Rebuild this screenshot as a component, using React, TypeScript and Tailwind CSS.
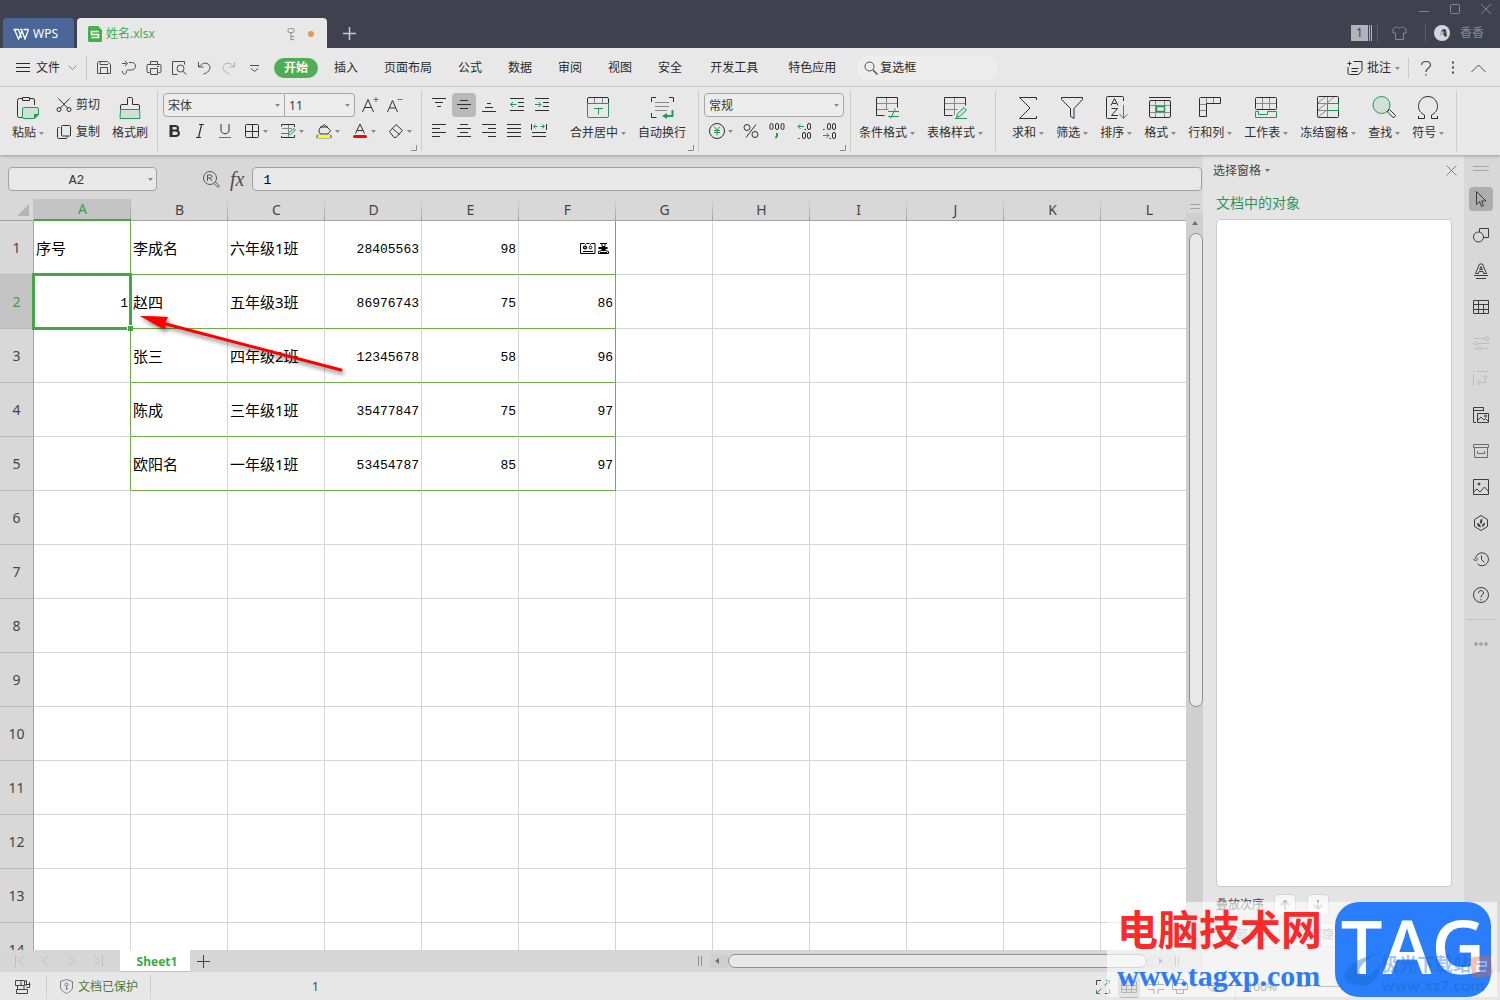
import React from 'react';

const GREEN = '#219a56';

type IcoProps = { w?: number; h?: number; className?: string; children: React.ReactNode };

const Ico: React.FC<IcoProps> = ({ w = 16, h = w, className = '', children }) => (
  <svg width={w} height={h} viewBox={`0 0 ${w} ${h}`} fill="none" stroke="currentColor" className={`shrink-0 ${className}`} aria-hidden="true">
    {children}
  </svg>
);

const Caret = ({ className = 'text-[#8a8a8a]' }: { className?: string }) => (
  <svg width="5" height="3" viewBox="0 0 5 3" fill="currentColor" className={`shrink-0 ${className}`} aria-hidden="true">
    <path d="M0 0h5L2.500 3z" />
  </svg>
);

const Divider = () => <div className="my-1 w-px self-stretch bg-[#cbcbcb]" />;

const Corner = () => (
  <Ico w={6} className="absolute right-1 bottom-1 text-[#8a8a8a]">
    <path d="M5.500 0v5.500H0" />
  </Ico>
);

/* ---------- Ribbon icons, 24px ---------- */

const PasteIcon = () => (
  <Ico w={24}>
    <path d="M6.500 21.500h-3a2 2 0 0 1-2-2v-15a2 2 0 0 1 2-2H6M14 2.500h3a1.500 1.500 0 0 1 1.500 1.500v5" />
    <path d="M6.500 1.500h7v3h-7z" />
    <path d="M8 11.500h13a1.500 1.500 0 0 1 1.500 1.500v6l-4 3.500H8A1.500 1.500 0 0 1 6.500 21v-8A1.500 1.500 0 0 1 8 11.500z" fill="#cfe0d6" stroke={GREEN} />
    <path d="M18.500 22v-3.500h4" fill={GREEN} stroke={GREEN} />
  </Ico>
);

const BrushIcon = () => (
  <Ico w={24}>
    <path d="M9.500 8.500v-6a1 1 0 0 1 1-1h3a1 1 0 0 1 1 1v6h5.500a1.500 1.500 0 0 1 1.500 1.500v3.500h-19V10A1.500 1.500 0 0 1 4 8.500z" />
    <path d="M2.500 13.500h19l.5 9h-20z" fill="#cfe0d6" stroke={GREEN} />
  </Ico>
);

const MergeIcon = () => (
  <Ico w={24}>
    <path d="M8.500 2v5M16.500 2v5" stroke="#8a8a8a" />
    <path d="M1.500 7.500V3A1.500 1.500 0 0 1 3 1.500h18A1.500 1.500 0 0 1 22.500 3v4.500" />
    <path d="M1.500 7.500h21V20a1.500 1.500 0 0 1-1.500 1.500H3A1.500 1.500 0 0 1 1.500 20zM8 12.500h9M12.500 12.500v6" stroke={GREEN} />
  </Ico>
);

const WrapIcon = () => (
  <Ico w={24}>
    <path d="M6 1.500H1.500V6M19 1.500h4.500V6M1.500 17v4.500h5" />
    <path d="M5 6.500h14M5 10.500h14M5 14.500h12" stroke="#8a8a8a" />
    <path d="M22.500 14v6h-6" stroke={GREEN} strokeWidth="2" />
    <path d="M17 17v6l-5-3z" fill={GREEN} stroke="none" />
  </Ico>
);

const CondIcon = () => (
  <Ico w={24}>
    <path d="M11.500 2v6M11.500 8v6M1.500 7.500h21M1.500 13.500h12" stroke="#8a8a8a" />
    <path d="M9.500 19.500h-8v-18h21v10" />
    <path d="M13 15.500h11M13 20.500h11M20.500 12.500l-5 10" stroke={GREEN} />
  </Ico>
);

const StyleIcon = () => (
  <Ico w={24}>
    <path d="M11.500 2v17M1.500 7.500h21M1.500 13.500h13" stroke="#8a8a8a" />
    <path d="M9.500 19.500h-8v-18h21v8" />
    <path d="M13.500 21.500l1-4 6.500-6 2.500 2.500-6 6-4 1.500zM12 22.500h12" fill="#cfe0d6" stroke={GREEN} />
  </Ico>
);

const SumIcon = () => (
  <Ico w={24}>
    <path d="M20.500 4V1.500h-17L14 12 3.500 22.500h17V20" />
  </Ico>
);

const FilterIcon = () => (
  <Ico w={24}>
    <path d="M1.500 1.500h21v2l-8.500 9v10l-3.500-2v-8l-9-9z" />
  </Ico>
);

const SortIcon = () => (
  <Ico w={24}>
    <path d="M19.500 5V1.500A1 1 0 0 0 18.500.5h-15a1 1 0 0 0-1 1v20a1 1 0 0 0 1 1H13" />
    <path d="M7 9.500l3.500-7 3.500 7M8.500 7.500h4M7.500 12.500h6l-6 7h6.500" />
    <path d="M19.500 9v13M15.500 18l4 4.500 4-4.500" stroke={GREEN} />
  </Ico>
);

const FormatIcon = () => (
  <Ico w={24}>
    <path d="M1 1.500h22" />
    <path d="M7.500 5v16M16.500 5v16M1 9.500h22M1 16.500h22" stroke="#8a8a8a" />
    <rect x="1.500" y="4.500" width="21" height="17" rx="1.500" />
    <path d="M8.500 10.500h8v5h-8z" fill="#e8e8e8" stroke={GREEN} strokeWidth="1.500" />
  </Ico>
);

const RowColIcon = () => (
  <Ico w={24}>
    <path d="M8.500 2v6M15.500 2v6M2 8.500h6M2 14.500h6" stroke="#8a8a8a" />
    <path d="M2.500 1.500h20v6h-14v13h-7v-18a1 1 0 0 1 1-1z" />
  </Ico>
);

const SheetIcon = () => (
  <Ico w={24}>
    <path d="M8.500 2v12M15.500 2v12M2 7.500h20" stroke="#8a8a8a" />
    <rect x="1.500" y="1.500" width="21" height="12" rx="1" />
    <path d="M1.500 15.500v6h21v-6h-9v3h-9v-3z" stroke={GREEN} />
  </Ico>
);

const FreezeIcon = () => (
  <Ico w={24}>
    <path d="M11.500 1v21M2 7.500h20M2 14.500h20M2 7l7-6M11 7l7-6M2 14l9-7M2 21l9-7" stroke="#8a8a8a" />
    <rect x="1.500" y=".5" width="21" height="21" rx="1" />
    <path d="M11.500 7.500h11v7h-11z" fill="#e8e8e8" stroke={GREEN} />
  </Ico>
);

const FindIcon = () => (
  <Ico w={24}>
    <circle cx="9.500" cy="9" r="8.500" fill="#cfe0d6" stroke={GREEN} />
    <path d="M16 15l1.500-1.500 6 6-2 2.500-6-6z" />
  </Ico>
);

const OmegaIcon = () => (
  <Ico w={24}>
    <path d="M2 22.500h6.500v-3.500C4.500 17 2.500 14 2.500 10.500c0-5.500 4-10 9.500-10s9.500 4.500 9.500 10c0 3.500-2 6.500-6 8.500v3.500H22M2.500 22.500V20M21.500 22.500V20" />
  </Ico>
);

type BigProps = { label: string; icon: React.ReactNode; caret?: boolean };

const BigButton = ({ label, icon, caret = true }: BigProps) => (
  <button type="button" className="flex flex-col items-center gap-[5px] pt-[9px] text-[#2f2f2f]">
    {icon}
    <span className="flex h-4 items-center gap-[3px] text-xs leading-4 whitespace-nowrap">
      {label}
      {caret && <Caret />}
    </span>
  </button>
);

const TOOLS: BigProps[] = [
  { label: '求和', icon: <SumIcon /> },
  { label: '筛选', icon: <FilterIcon /> },
  { label: '排序', icon: <SortIcon /> },
  { label: '格式', icon: <FormatIcon /> },
  { label: '行和列', icon: <RowColIcon /> },
  { label: '工作表', icon: <SheetIcon /> },
  { label: '冻结窗格', icon: <FreezeIcon /> },
  { label: '查找', icon: <FindIcon /> },
  { label: '符号', icon: <OmegaIcon /> },
];

/* ---------- Title bar ---------- */

const TitleBar = () => (
  <header className="flex h-12 shrink-0 items-end bg-[#3f424e] pl-[3px]">
    <button type="button" className="mr-[3px] flex h-[30px] w-[71px] items-center gap-1 rounded-t bg-[#4a6798] pt-0.5 pl-2.5 text-xs text-white">
      <Ico w={16} h={12}>
        <path d="M.5 1.500h5L8.500 10M1.500 1.500l4 9.500L9 3.500M15.500 1.500L12 11 8.500 1.500H7M10.500 1.500h5" strokeWidth="1.300" />
      </Ico>
      WPS
    </button>
    <div className="flex h-[30px] w-[250px] items-center rounded-t bg-[#e8e8e8] pt-0.5 pr-[13px] pl-[11px]">
      <Ico w={14} h={16} className="mr-1">
        <path d="M1.500 0H10l4 4v10.500a1.500 1.500 0 0 1-1.500 1.500h-11A1.500 1.500 0 0 1 0 14.500v-13A1.500 1.500 0 0 1 1.500 0z" fill="#45b049" stroke="none" />
        <path d="M10.500 5.500h-7v3h7v3h-7" stroke="#fff" strokeWidth="1.500" />
      </Ico>
      <span className="flex-1 text-xs text-[#45a84a]">姓名.xlsx</span>
      <Ico w={8} h={13} className="mr-[13px] text-[#8f8f8f]">
        <rect x="1" y=".5" width="6" height="4" rx="1.500" />
        <path d="M4 4.500v8M4 8.500h3M4 11.500h3" />
      </Ico>
      <span className="size-1.5 rounded-full bg-[#e59a55]" />
    </div>
    <button type="button" aria-label="新建" className="ml-4 flex h-[30px] w-4 items-center text-[#c6c7ca]">
      <Ico w={13}>
        <path d="M6.500 0v13M0 6.500h13" strokeWidth="1.500" />
      </Ico>
    </button>
    <div className="ml-auto flex h-full flex-col items-end text-[#85878f]">
      <div className="flex h-[18px] items-center gap-[21px] pr-[9px]">
        <button type="button" aria-label="最小化"><Ico w={10}><path d="M0 7.500h10" /></Ico></button>
        <button type="button" aria-label="最大化"><Ico w={10}><rect x=".5" y=".5" width="9" height="9" rx="1" /></Ico></button>
        <button type="button" aria-label="关闭"><Ico w={10}><path d="M0 0l10 10M10 0L0 10" /></Ico></button>
      </div>
      <div className="flex h-[30px] items-center pr-4 text-xs">
        <span className="flex h-4 w-[17px] items-center justify-center bg-[#b2b3b8] text-[#3f424e]">1</span>
        <Ico w={4} h={16} className="text-[#b2b3b8]"><path d="M1.500 0v16M3.500 0v16" /></Ico>
        <span className="mr-3.5 ml-[5px] h-5 w-px bg-[#5a5d68]" />
        <Ico w={15} h={14}>
          <path d="M4.500.5L1 3v4h2.500v6.500h8V7H14V3L10.500.5c-1 2-5 2-6 0z" />
        </Ico>
        <span className="mr-2 ml-[18px] h-5 w-px bg-[#5a5d68]" />
        <Ico w={16} className="mr-2.5">
          <circle cx="8" cy="8" r="8" fill="#cdd8e0" stroke="none" />
          <path d="M7 8c0-4 4-5 5-3l1 6-2 1-2-3-3 1z" fill="#4b4247" stroke="none" />
          <path d="M8 6l2 1-1 2-3 2z" fill="#d9b9a6" stroke="none" />
        </Ico>
        香香
      </div>
    </div>
  </header>
);

/* ---------- Menu row ---------- */

const QUICK: { label: string; dim?: boolean; icon: React.ReactNode }[] = [
  { label: '保存', icon: <><path d="M2.500 1.500h9l3 3v9h-13v-11z" /><path d="M4 1.500v3h8M4.500 13.500v-6h7v6" /></> },
  { label: '输出', icon: <><path d="M1 3.500h4.500M4 1l2.500 2.500L4 6M8 2.500h2.500c2.500 0 4 1.500 4 3.500s-1.500 4-4 4H7.500c-2 0-2 1-2 2 0 1-.5 2-2 2s-2.500-1.500-2-3" /></> },
  { label: '打印', icon: <><path d="M4.500 4.500v-3h7v3M3.500 12.500H2a1 1 0 0 1-1-1v-6a1 1 0 0 1 1-1h12a1 1 0 0 1 1 1v6a1 1 0 0 1-1 1h-1.500M11 6.500h2" /><path d="M4.500 8.500h7v6h-7z" /></> },
  { label: '打印预览', icon: <><path d="M6.500 14.500h-5v-13h12v3" /><circle cx="9.500" cy="8.500" r="3.500" /><path d="M12 11.500l3.500 3" /></> },
  { label: '撤销', icon: <path d="M2.500 2v5h5M3 7c2-3 5-4.500 8-3.500s3.500 4 2.500 6-3 4-6 4.500" /> },
  { label: '恢复', dim: true, icon: <path d="M13.500 2v5h-5M13 7C11 4 8 2.500 5 3.500s-3.500 4-2.500 6 3 4 6 4.500" /> },
];

const TABS = ['插入', '页面布局', '公式', '数据', '审阅', '视图', '安全'];
const WIDE_TABS = ['开发工具', '特色应用'];

const MenuRow = () => (
  <nav className="flex h-[39px] shrink-0 items-center border-b border-[#d6d6d6] bg-[#e8e8e8] pt-0.5 pl-4 text-xs text-[#2a2a2a]">
    <button type="button" className="flex items-center gap-1.5 pr-[9px]">
      <Ico w={14} h={12}><path d="M0 1.500h14M0 5.500h14M0 9.500h14" /></Ico>
      文件
      <Ico w={9} h={6} className="ml-0.5 text-[#8a8a8a]"><path d="M.5.5l4 4 4-4" /></Ico>
    </button>
    <span className="h-6 w-px bg-[#c2c2c2]" />
    <div className="flex gap-[9px] pl-[9px] text-[#4c4c4c]">
      {QUICK.map((q) => (
        <button key={q.label} type="button" aria-label={q.label} className={q.dim ? 'text-[#b0b0b0]' : ''}>
          <Ico>{q.icon}</Ico>
        </button>
      ))}
      <button type="button" aria-label="自定义快速访问工具栏">
        <Ico><path d="M4 5.500h9M5 8.500l3.500 3 3.500-3" /></Ico>
      </button>
    </div>
    <button type="button" className="mr-[3px] ml-3 h-5 w-11 rounded-full bg-[#4fae55] text-center font-bold text-white">开始</button>
    {TABS.map((t) => (
      <button key={t} type="button" className="px-[13px] whitespace-nowrap">{t}</button>
    ))}
    {WIDE_TABS.map((t) => (
      <button key={t} type="button" className="px-[15px] whitespace-nowrap">{t}</button>
    ))}
    <label className="ml-1.5 flex h-6 w-[140px] items-center gap-0.5 rounded-full bg-[#ededed] pl-[7px]">
      <Ico w={14} className="text-[#4c4c4c]">
        <circle cx="5.500" cy="5.500" r="4.500" />
        <path d="M9 9l4.500 4.500" strokeWidth="1.500" />
      </Ico>
      <input aria-label="查找命令" defaultValue="复选框" className="w-20 bg-transparent outline-none" />
    </label>
    <div className="ml-auto flex items-center pr-3.5">
      <button type="button" className="flex items-center gap-1">
        <Ico w={16} h={14}>
          <path d="M6.500.5H15v9l-3.500 4h-9A1.500 1.500 0 0 1 1 12V6M.5 2.500h4M2.500.500v4M4.500 7.500h7M4.500 10.500h6" />
        </Ico>
        批注
        <Caret />
      </button>
      <span className="mx-2 h-5 w-px bg-[#c9c9c9]" />
      <button type="button" aria-label="帮助" className="mr-5 ml-1 text-[#4c4c4c]">
        <Ico w={10} h={15}><path d="M.5 4c0-2.500 2-3.500 4.500-3.500S9.500 2 9.500 4C9.500 7 5 7 5 11M5 13v1.500" strokeWidth="1.200" /></Ico>
      </button>
      <button type="button" aria-label="更多" className="mr-4 text-[#4c4c4c]">
        <Ico w={4} h={14}><path d="M1 1.500h2M1 6.500h2M1 11.500h2" strokeWidth="2" /></Ico>
      </button>
      <button type="button" aria-label="折叠功能区" className="text-[#4c4c4c]">
        <Ico w={15} h={9}><path d="M.5 8l7-7 7 7" /></Ico>
      </button>
    </div>
  </nav>
);

/* ---------- Ribbon ---------- */

type SmallProps = { label: string; w?: number; caret?: boolean; children: React.ReactNode };

const SmallButton = ({ label, w = 16, caret, children }: SmallProps) => (
  <button type="button" aria-label={label} className="flex h-6 items-center gap-[3px]">
    <Ico w={w} h={16}>{children}</Ico>
    {caret && <Caret />}
  </button>
);

const FieldSelect = ({ label, value, className }: { label: string; value: string; className: string }) => (
  <label className={`relative flex h-6 items-center border-[#a6a6a6] bg-[#ededed] ${className}`}>
    <select aria-label={label} defaultValue={value} className="h-full w-full appearance-none bg-transparent pt-px pl-1 text-xs text-[#3a3a3a] outline-none">
      <option>{value}</option>
    </select>
    <Caret className="pointer-events-none absolute right-1 text-[#8a8a8a]" />
  </label>
);

// top, middle, bottom
const V_ALIGN = [
  { label: '顶端对齐', d: 'M1 1.500h14M4 5.500h8M6 9.500h4' },
  { label: '垂直居中', d: 'M4 3.500h8M1 7.500h14M4 11.500h8', active: true },
  { label: '底端对齐', d: 'M6 6.500h4M4 10.500h8M1 14.500h14' },
];

const H_ALIGN = [
  { label: '左对齐', d: 'M1 1.500h14M1 5.500h8M1 9.500h14M1 13.500h8' },
  { label: '水平居中', d: 'M4 1.500h8M1 5.500h14M4 9.500h8M1 13.500h14' },
  { label: '右对齐', d: 'M1 1.500h14M7 5.500h8M1 9.500h14M7 13.500h8' },
  { label: '两端对齐', d: 'M1 1.500h14M1 5.500h14M1 9.500h14M1 13.500h14' },
];

const Ribbon = () => (
  <div className="relative z-10 flex h-[68px] shrink-0 bg-[#e8e8e8] text-xs text-[#2f2f2f] shadow-[0_1px_3px_rgba(0,0,0,0.3)]">
    <div className="flex items-start gap-3 pr-[9px] pl-3">
      <BigButton label="粘贴" icon={<PasteIcon />} />
      <div className="flex flex-col gap-[3px] pt-1.5">
        <button type="button" className="flex h-6 items-center gap-1 whitespace-nowrap">
          <Ico>
            <path d="M2.500 1.500l9 9.500M13.500 1.500l-9 9.500" />
            <circle cx="3" cy="12.500" r="2" />
            <circle cx="13" cy="12.500" r="2" />
          </Ico>
          剪切
        </button>
        <button type="button" className="flex h-6 items-center gap-1 whitespace-nowrap">
          <Ico>
            <rect x="5.500" y="1.500" width="9" height="10.500" rx="1" />
            <path d="M3.500 3.500h-1a1 1 0 0 0-1 1v9a1 1 0 0 0 1 1h7.500a1 1 0 0 0 1-1v-1" />
          </Ico>
          复制
        </button>
      </div>
      <BigButton label="格式刷" icon={<BrushIcon />} caret={false} />
    </div>
    <Divider />

    <div className="relative flex w-[263px] flex-col gap-0.5 pt-1.5 pl-[5px]">
      <div className="flex items-center">
        <FieldSelect label="字体" value="宋体" className="w-[122px] rounded-l border" />
        <FieldSelect label="字号" value="11" className="w-[70px] rounded-r border border-l-0" />
        <div className="flex gap-2 pl-1.5">
          <SmallButton label="增大字号" w={18}>
            <path d="M1.500 15L7 2.500 12.500 15M3.500 10.500h7" />
            <path d="M12.500 2.500h5M15 0v5" stroke={GREEN} />
          </SmallButton>
          <SmallButton label="减小字号">
            <path d="M.5 15L5.500 3.500 10.500 15M2.500 11h6" />
            <path d="M10.500 2.500h5" stroke={GREEN} />
          </SmallButton>
        </div>
      </div>
      <div className="flex items-center gap-[9px] pl-1">
        <button type="button" aria-label="加粗" className="h-6 w-4">
          <Ico><path d="M3.500 3h4.500c4 0 4 4.500 0 4.500H3.500zM3.500 7.500h5c4.500 0 4.500 5.500 0 5.500h-5zM4.500 3v10" strokeWidth="2" /></Ico>
        </button>
        <SmallButton label="倾斜"><path d="M7 1.500h5M4 14.500h5M9.500 2l-3 12.500" strokeWidth="1.200" /></SmallButton>
        <SmallButton label="下划线">
          <path d="M4 1v6c0 5 8 5 8 0V1" />
          <path d="M2 14.500h12" stroke={GREEN} />
        </SmallButton>
        <div className="flex gap-3 pl-0.5">
          <SmallButton label="边框" caret><rect x="1.500" y="1.500" width="13" height="13" rx="1" /><path d="M8.500 2v12M2 8.500h12" /></SmallButton>
          <SmallButton label="绘图边框" caret>
            <path d="M8.500 2v12M2 5.500h10" stroke="#8a8a8a" />
            <path d="M14.500 4V1.500h-13v2M1.500 13v1.500h13V12" />
            <path d="M1 10.500h7l6-5 1.500 1.500-5 4.500H8" stroke={GREEN} />
          </SmallButton>
          <SmallButton label="填充颜色" caret>
            <path d="M3.500 5.500l5-4 6 6c-1 2-2 3-3.500 3.500H5c-2-1-2.500-3-1.500-5.500zM4 4h8" />
            <path d="M2 13.500h12" stroke="#8a8a8a" strokeWidth="4" strokeLinecap="round" />
            <path d="M2 13.500h12" stroke="#ffff00" strokeWidth="3" />
          </SmallButton>
          <SmallButton label="字体颜色" caret>
            <path d="M3.500 10.500L8 1l4.500 9.500M5 7.500h6" />
            <path d="M2.500 13.500h11" stroke="#ff0000" strokeWidth="3" strokeLinecap="round" />
          </SmallButton>
          <SmallButton label="清除" caret>
            <path d="M1.500 8.500l6.500-7 6.500 6-6.500 7H6zM4.500 5.500l7 6" />
          </SmallButton>
        </div>
      </div>
      <Corner />
    </div>
    <Divider />

    <div className="relative flex gap-4 pr-3 pl-[5px]">
      <div className="flex flex-col gap-0.5 pt-1.5">
        <div className="flex gap-1">
          <div className="flex gap-px">
            {V_ALIGN.map((a) => (
              <button key={a.label} type="button" aria-label={a.label} className={`flex size-6 items-center justify-center rounded ${a.active ? 'bg-[#b9b9b9]' : ''}`}>
                <Ico><path d={a.d} /></Ico>
              </button>
            ))}
          </div>
          <div className="flex gap-px">
            <button type="button" aria-label="减少缩进" className="flex size-6 items-center justify-center">
              <Ico><path d="M1 1.500h14M9 5.500h6M9 9.500h6M1 13.500h14" /><path d="M1.500 7.500h6M4 5L1.500 7.500 4 10" stroke={GREEN} /></Ico>
            </button>
            <button type="button" aria-label="增加缩进" className="flex size-6 items-center justify-center">
              <Ico><path d="M1 1.500h14M9 5.500h6M9 9.500h6M1 13.500h14" /><path d="M1 7.500h6M4.500 5L7 7.500 4.500 10" stroke={GREEN} /></Ico>
            </button>
          </div>
        </div>
        <div className="flex gap-px">
          {H_ALIGN.map((a) => (
            <button key={a.label} type="button" aria-label={a.label} className="flex size-6 items-center justify-center">
              <Ico><path d={a.d} /></Ico>
            </button>
          ))}
          <button type="button" aria-label="分散对齐" className="flex size-6 items-center justify-center">
            <Ico>
              <path d="M.5 1v6M15.500 1v6M1 9.500h14M1 13.500h14" />
              <path d="M2.500 3.500h4M9.500 3.500h4M4.500 1.500l-2 2 2 2M11.500 1.500l2 2-2 2" stroke={GREEN} />
            </Ico>
          </button>
        </div>
      </div>
      <div className="flex items-start gap-3">
        <BigButton label="合并居中" icon={<MergeIcon />} />
        <BigButton label="自动换行" icon={<WrapIcon />} caret={false} />
      </div>
      <Corner />
    </div>
    <Divider />

    <div className="relative flex flex-col gap-0.5 pt-1.5 pr-1.5 pl-[5px]">
      <FieldSelect label="数字格式" value="常规" className="w-[140px] rounded border" />
      <div className="flex items-center gap-2.5 pl-[5px]">
        <SmallButton label="货币格式" caret>
          <circle cx="8" cy="8" r="7.500" />
          <path d="M5 3.500L8 7l3-3.500M8 7v5.500M5 7.500h6M5 9.500h6" stroke={GREEN} />
        </SmallButton>
        <SmallButton label="百分比"><circle cx="4" cy="4.500" r="3" /><circle cx="12" cy="11.500" r="3" /><path d="M13 1.500l-10 13" /></SmallButton>
        <SmallButton label="千位分隔">
          <rect x="1" y=".5" width="3" height="6" rx="1.500" />
          <rect x="6.500" y=".5" width="3" height="6" rx="1.500" />
          <rect x="12" y=".5" width="3" height="6" rx="1.500" />
          <path d="M8 10v3l-1.500 2" stroke={GREEN} strokeWidth="2" />
        </SmallButton>
        <div className="flex gap-[9px] pl-0.5">
          <SmallButton label="增加小数位">
            <path d="M1 3.500h6M3.500 1L1 3.500 3.500 6" stroke={GREEN} />
            <path d="M7.500 6.500h1.500M1 15.500h1.500" />
            <rect x="10.500" y=".5" width="3" height="6" rx="1.500" />
            <rect x="5.500" y="9.500" width="3" height="6" rx="1.500" />
            <rect x="10.500" y="9.500" width="3" height="6" rx="1.500" />
          </SmallButton>
          <SmallButton label="减少小数位">
            <path d="M1 12.500h6M4.500 10L7 12.500 4.500 15" stroke={GREEN} />
            <path d="M1 6.500h1.500M7.500 15.500h1.500" />
            <rect x="5.500" y=".5" width="3" height="6" rx="1.500" />
            <rect x="10.500" y=".5" width="3" height="6" rx="1.500" />
            <rect x="10.500" y="9.500" width="3" height="6" rx="1.500" />
          </SmallButton>
        </div>
      </div>
      <Corner />
    </div>
    <Divider />

    <div className="flex items-start gap-3 pr-3 pl-2">
      <BigButton label="条件格式" icon={<CondIcon />} />
      <BigButton label="表格样式" icon={<StyleIcon />} />
    </div>
    <Divider />

    <div className="flex items-start gap-3 pr-3 pl-4">
      {TOOLS.map((t) => (
        <BigButton key={t.label} {...t} />
      ))}
    </div>
    <Divider />
  </div>
);

/* ---------- Sheet ---------- */

const COLS = ['A', 'B', 'C', 'D', 'E', 'F', 'G', 'H', 'I', 'J', 'K', 'L'];

const SYMBOLS = '@symbols';

const DATA: string[][] = [
  ['序号', '李成名', '六年级1班', '28405563', '98', SYMBOLS],
  ['1', '赵四', '五年级3班', '86976743', '75', '86'],
  ['', '张三', '四年级2班', '12345678', '58', '96'],
  ['', '陈成', '三年级1班', '35477847', '75', '97'],
  ['', '欧阳名', '一年级1班', '53454787', '85', '97'],
];

const isNumber = (v: string) => /^\d+$/.test(v);

// bordered table spans B1:F5
const cellBorder = (r: number, c: number) => {
  const bottom = r < 5 && c >= 1 && c <= 5 ? 'border-b-[#70ad47]' : 'border-b-[#d4d4d4]';
  const right = r < 5 && (c === 0 || c === 5) ? 'border-r-[#70ad47]' : 'border-r-[#d4d4d4]';
  return `${bottom} ${right}`;
};

const SymbolGlyphs = () => (
  <Ico w={30} h={13} className="mr-[3px] ml-auto text-black">
    <path d="M.5 1.500h4l1 1 1-1h3l1 1 1-1h3.500v10H.5zM3 9.500h10" />
    <circle cx="5" cy="5.500" r="1.400" strokeWidth="1.400" />
    <circle cx="10.500" cy="5.500" r="1.400" />
    <path d="M20 1.500h7M22 2v2.500h3V2" />
    <path d="M18.500 6h9M21.500 7.500h4" strokeWidth="2" />
    <path d="M18.500 11.500v-2l3-1h4l3 1v2zM20 10.500h7" />
  </Ico>
);

const Grid = () => (
  <div className="relative min-w-0 flex-1 overflow-hidden bg-white">
    <table className="w-[1198px] table-fixed border-separate border-spacing-0">
      <colgroup>
        <col className="w-[34px]" />
        {COLS.map((c) => <col key={c} />)}
      </colgroup>
      <thead>
        <tr className="h-[22px] text-sm leading-5 text-[#454545]">
          <th className="border-r border-b border-r-[#c4c4c4] border-b-[#a3a3a3] bg-[#d8d8d8] p-0">
            <Ico w={12} className="mr-1 ml-auto text-[#b4b4b4]"><path d="M12 0v12H0z" fill="currentColor" stroke="none" /></Ico>
          </th>
          {COLS.map((c, i) => (
            <th
              key={c}
              scope="col"
              className={`bg-[linear-gradient(to_bottom,transparent,#a0a0a0)] bg-[length:1px_100%] bg-right bg-no-repeat p-0 font-normal ${
                i === 0 ? 'border-b-2 border-[#43a843] bg-[#c4c4c4] text-[#3a9d44]' : 'border-b border-[#a3a3a3] bg-[#d8d8d8]'
              }`}
            >
              {c}
            </th>
          ))}
        </tr>
      </thead>
      <tbody>
        {Array.from({ length: 14 }, (_, r) => (
          <tr key={r} className="h-[54px]">
            <th
              scope="row"
              className={`border-r border-b border-r-[#a3a3a3] border-b-[#bababa] p-0 text-sm font-normal ${
                r === 1 ? 'bg-[#c4c4c4] text-[#3a9d44]' : 'bg-[#d8d8d8] text-[#454545]'
              }`}
            >
              {r + 1}
            </th>
            {COLS.map((c, i) => {
              const value = DATA[r]?.[i] ?? '';
              const selected = r === 1 && i === 0;
              return (
                <td
                  key={c}
                  className={`border-r border-b px-0.5 pb-0 whitespace-nowrap text-black ${cellBorder(r, i)} ${
                    isNumber(value) ? 'pt-1 text-right font-["Liberation_Mono",monospace] text-[13px]' : 'pt-0.5 text-[15px]'
                  } ${selected ? 'relative' : ''}`}
                >
                  {value === SYMBOLS ? <SymbolGlyphs /> : value}
                  {selected && (
                    <span className="absolute -inset-0.5 border-[3px] border-[#43a843]">
                      <span className="absolute -right-1 -bottom-1 size-1.5 border-t border-l border-white bg-[#43a843]" />
                    </span>
                  )}
                </td>
              );
            })}
          </tr>
        ))}
      </tbody>
    </table>

    {/* red pointer at A2 */}
    <svg width="220" height="80" viewBox="0 0 220 80" className="pointer-events-none absolute top-[109px] left-[136px]" aria-hidden="true">
      <g className="drop-shadow-[2px_3px_2px_rgba(0,0,0,0.5)]">
        <path d="M4 8l28 1-3 6-2 6z" fill="#ff0000" />
        <path d="M4 8l28 1-4 6 2 6z" fill="#ff0000" />
        <path d="M26 15l179 47" stroke="#ff0000" strokeWidth="3" strokeLinecap="round" />
      </g>
    </svg>
  </div>
);

const VScroll = () => (
  <div className="flex w-[17px] shrink-0 flex-col items-center border-l border-[#d0d0d0] bg-[#cfcfcf]">
    <div className="flex h-3.5 w-full items-center justify-center bg-[#d8d8d8] text-[#a3a3a3]">
      <Ico w={10} h={6}><path d="M0 1.500h10M0 5.500h10" /></Ico>
    </div>
    <button type="button" aria-label="向上滚动" className="flex h-5 items-center text-[#707070]">
      <Ico w={6} h={4}><path d="M0 4l3-4 3 4z" fill="currentColor" stroke="none" /></Ico>
    </button>
    <div className="min-h-0 w-full flex-1 pl-0.5">
      <div className="h-[68%] w-3.5 rounded-full border border-[#8f8f8f] bg-[#e8e8e8]" />
    </div>
    <button type="button" aria-label="向下滚动" className="flex h-5 items-center text-[#707070]">
      <Ico w={6} h={4}><path d="M0 0l3 4 3-4z" fill="currentColor" stroke="none" /></Ico>
    </button>
  </div>
);

const FormulaBar = () => (
  <div className="flex h-11 shrink-0 items-center pt-1 pr-px pl-2">
    <label className="relative flex h-6 w-[149px] items-center rounded border border-[#a3a3a3] bg-[#e8e8e8]">
      <input aria-label="名称框" defaultValue="A2" className='w-full bg-transparent pt-1 pr-3 text-center font-["Liberation_Mono",monospace] text-[13px] text-[#3a3a3a] outline-none' />
      <Caret className="absolute right-[3px] text-[#8a8a8a]" />
    </label>
    <button type="button" aria-label="查找" className="ml-[45px] text-[#555]">
      <Ico w={18}>
        <circle cx="8" cy="8" r="6.500" />
        <path d="M5.500 11V5h3c2 0 2 3 0 3h-3M8 8l2 3" />
        <path d="M13.500 12l4 4-1.500 1.500-4-4" />
      </Ico>
    </button>
    <button type="button" aria-label="插入函数" className='ml-2.5 font-["Liberation_Serif",serif] text-xl leading-5 text-[#4c4c4c] italic'>fx</button>
    <input
      aria-label="编辑栏"
      defaultValue="1"
      className='ml-2 h-6 min-w-0 flex-1 rounded border border-[#a3a3a3] bg-[#e8e8e8] px-2.5 pt-0.5 font-["Liberation_Mono",monospace] text-[13px] text-black outline-none'
    />
  </div>
);

const NAV = [
  { label: '第一张', d: 'M1.500 0v12M10 1L4.500 6 10 11' },
  { label: '上一张', d: 'M8 1L2.500 6 8 11' },
  { label: '下一张', d: 'M3 1l5.500 5L3 11' },
  { label: '最后一张', d: 'M2 1l5.500 5L2 11M10.500 0v12' },
];

const SheetTabs = () => (
  <div className="flex h-[22px] shrink-0 bg-[#d6d6d6]">
    <div className="flex flex-1 items-center">
      <div className="flex gap-3.5 px-3.5 text-[#bdbdbd]">
        {NAV.map((n) => (
          <button key={n.label} type="button" aria-label={n.label}><Ico w={12}><path d={n.d} /></Ico></button>
        ))}
      </div>
      <button type="button" className="ml-0.5 h-full w-[70px] border-b border-[#c0c0c0] bg-white pt-0.5 pl-1 text-xs font-bold text-[#3fa846]">Sheet1</button>
      <button type="button" aria-label="新建工作表" className="ml-[7px] text-[#3f3f3f]">
        <Ico w={13}><path d="M6.500 0v13M0 6.500h13" /></Ico>
      </button>
    </div>
    <div className="flex w-[42%] items-center text-[#909090]">
      <Ico w={4} h={10} className="mr-2"><path d="M.5 0v10M3.500 0v10" /></Ico>
      <button type="button" aria-label="向左滚动" className="flex h-3.5 w-[18px] items-center bg-[#cfcfcf] pl-[5px] text-[#707070]">
        <Ico w={4} h={6}><path d="M4 0L0 3l4 3z" fill="currentColor" stroke="none" /></Ico>
      </button>
      <div className="h-3.5 flex-1 rounded-full border border-[#8f8f8f] bg-[#e8e8e8]" />
      <button type="button" aria-label="向右滚动" className="flex h-3.5 w-7 items-center justify-center bg-[#cfcfcf] text-[#707070]">
        <Ico w={4} h={6}><path d="M0 0l4 3-4 3z" fill="currentColor" stroke="none" /></Ico>
      </button>
      <Ico w={4} h={10} className="mr-6"><path d="M.5 0v10M3.500 0v10" /></Ico>
    </div>
  </div>
);

/* ---------- Selection pane ---------- */

const SelectionPane = () => (
  <aside className="flex w-[261px] shrink-0 flex-col bg-[#e4e4e4] text-xs">
    <div className="flex h-[31px] items-center justify-between pr-[7px] pl-2.5 text-[#444]">
      <button type="button" className="flex items-center gap-1">选择窗格<Caret className="text-[#707070]" /></button>
      <button type="button" aria-label="关闭窗格" className="text-[#808080]">
        <Ico w={11}><path d="M.5.5l10 10M10.500.5l-10 10" /></Ico>
      </button>
    </div>
    <div className="flex min-h-0 flex-1 flex-col pr-3 pl-[13px]">
      <h2 className="flex h-[33px] items-center text-sm text-[#2f935c]">文档中的对象</h2>
      <div className="min-h-0 flex-1 rounded-sm border border-[#cacaca] bg-white" />
      <div className="flex h-9 items-center text-[#444]">
        叠放次序
        <button type="button" aria-label="上移一层" className="mr-[11px] ml-2.5 flex size-[22px] items-center justify-center rounded-sm border border-[#d4d4d4] bg-[#f6f6f6] text-[#b0b0b0]">
          <Ico w={10}><path d="M5 10V1M1 5l4-4 4 4" strokeWidth="2" /></Ico>
        </button>
        <button type="button" aria-label="下移一层" className="flex size-[22px] items-center justify-center rounded-sm border border-[#d4d4d4] bg-[#f6f6f6] text-[#b0b0b0]">
          <Ico w={10}><path d="M5 0v9M1 5l4 4 4-4" strokeWidth="2" /></Ico>
        </button>
      </div>
      <div className="mb-[25px] flex gap-2.5 text-[#8f8f8f]">
        <button type="button" className="h-6 w-16 rounded-sm border border-[#d4d4d4] bg-[#f0f0f0]">全部显示</button>
        <button type="button" className="h-6 w-16 rounded-sm border border-[#d4d4d4] bg-[#f0f0f0]">全部隐藏</button>
      </div>
    </div>
  </aside>
);

const RAIL: { label: string; tone?: string; icon: React.ReactNode }[] = [
  { label: '形状', icon: <><path d="M6.500 5V1.500h9v9h-5" /><circle cx="5.500" cy="10" r="5" /></> },
  { label: '艺术字', icon: <><path d="M2.500 10.500l4-9.500h3l4 9.500h-3l-.5-2h-4l-.5 2zM6.500 6.500L8 3.500l1.500 3zM1 12.500h14M3 15.500h10" /></> },
  { label: '表格', icon: <path d="M.5 1.500h15v13H.5zM1 5.500h14M1 10.500h14M5.500 6v8.500M10.500 6v8.500M5.500 2v3.500" /> },
  { label: '属性', tone: 'text-[#bdbdbd]', icon: <><path d="M0 3.500h12M5 8.500h11M0 8.500h1M0 13.500h5M9 13.500h7" /><circle cx="14" cy="3.500" r="1.800" /><circle cx="3" cy="8.500" r="1.800" /><circle cx="7" cy="13.500" r="1.800" /></> },
  { label: '转换', tone: 'text-[#bdbdbd]', icon: <path d="M0 .5h2M4 .5h12M.5 3v12.500M12.500 4v7.500h-8M9.500 7l3-3 3 3M7.500 8.500l-3 3 3 3.500" /> },
  { label: '素材', icon: <><path d="M3 15.500H.500v-15h10V4M.500 3.500h10" /><path d="M4.500 6.500h11v9h-11zM5 13l3-3 3 3 1.500-1.500 3 3" /><circle cx="12.500" cy="9" r="1" /></> },
  { label: '备份', tone: 'text-[#6d6d6d]', icon: <path d="M.5 1.500h15v3H.5zM1.500 4.500h13v10h-13zM4.500 8v2.500h7V8" /> },
  { label: '图片', icon: <><path d="M.5.5h15v15H.5zM1 12.500l3-2.500 3 3 4.500-5 4 4.500" /><circle cx="6" cy="5" r="1" fill="currentColor" /></> },
  { label: '稻壳', icon: <><path d="M8 .5l6.500 4v7L8 15.500l-6.500-4v-7z" /><path d="M8 12.500c-4-1-4-3-3.500-4.500 2 .5 3 2 3.500 4.500zM7 7c0-2 1-3 2-3.500.5 2 .5 4-1 6zM9 12c0-2 1-4 3-4.500 0 2.500-1 4-3 4.500z" fill="currentColor" stroke="none" /></> },
  { label: '历史版本', icon: <path d="M2.500 8a6.500 6.500 0 1 1 2 5M0 7.500l2.500 2.500L5 7.500M8.500 4.500v4l3 3" /> },
  { label: '帮助中心', icon: <><circle cx="8" cy="8" r="7.500" /><path d="M5.500 6c0-3.500 5-3 5 0C10.500 8 8 7.500 8 10.500M8 12v1.500" /></> },
];

const SideRail = () => (
  <aside className="flex w-9 shrink-0 flex-col items-center gap-3 bg-[#d8d8d8] pt-2.5 pr-0.5 text-[#3d3d3d]">
    <Ico w={16} h={10} className="text-[#a8a8a8]"><path d="M0 1.500h16M0 5.500h16" /></Ico>
    <button type="button" aria-label="选择" className="flex size-6 items-center justify-center rounded bg-[#adadad]">
      <Ico><path d="M3.500.5v13l3-3 2 5 2-1-2-4.500h4.500z" /></Ico>
    </button>
    {RAIL.map((r) => (
      <button key={r.label} type="button" aria-label={r.label} className={`flex size-6 items-center justify-center ${r.tone ?? ''}`}>
        <Ico>{r.icon}</Ico>
      </button>
    ))}
    <span className="h-px w-[30px] bg-[#c2c2c2]" />
    <button type="button" aria-label="更多" className="flex size-6 items-center justify-center text-[#8a8a8a]">
      <Ico w={14}><circle cx="2" cy="7" r="1.300" /><circle cx="7" cy="7" r="1.300" /><circle cx="12" cy="7" r="1.300" /></Ico>
    </button>
  </aside>
);

/* ---------- Status bar ---------- */

const StatusBar = () => (
  <footer className="flex h-7 shrink-0 items-center bg-[#e7e7e7] pt-px text-xs text-[#444]">
    <button type="button" aria-label="宏" className="mr-[15px] ml-[15px]">
      <Ico>
        <path d="M.5 1.500h9v5h-9zM6 1v5M9.500 3l2-1.500v5L9.500 5M12 5.500h3.500M14.500 3v5.500h-3M2.500 6.500v4M9 6.500v4M1.500 10.500h11v4h-11z" />
      </Ico>
    </button>
    <span className="h-6 w-px bg-[#cecece]" />
    <button type="button" className="mr-3 ml-3 flex items-center gap-1 text-[#4f7a36]">
      <Ico w={15} className="text-[#7d7d7d]">
        <path d="M7.500.5l6 2V8c0 3-3 5-6 6.500C4.500 13 1.500 11 1.500 8V2.500z" />
        <circle cx="7.500" cy="5.500" r="1.500" />
        <path d="M7.500 7v4M7.500 9.500h1.500" />
      </Ico>
      文档已保护
    </button>
    <span className="h-6 w-px bg-[#cecece]" />
    <span className="ml-[161px]">1</span>
    <div className="ml-auto flex items-center gap-2.5 pr-4">
      <div className="flex items-center gap-2">
        <button type="button" aria-label="全屏显示">
          <Ico w={14}>
            <path d="M.5 5V.5H5M9 13.500h4.500V9" />
            <path d="M8.500 5.500l5-5M10 .5h3.500V4M5.500 8.500l-5 5M.5 10v3.500H4" stroke={GREEN} />
          </Ico>
        </button>
        <button type="button" aria-label="普通视图" className="flex size-[22px] items-center justify-center rounded bg-[#b9b9b9]">
          <Ico><path d="M.5 2.500h15v11H.5zM1 6.500h14M1 10.500h14M5.500 3v10M10.500 3v10" /></Ico>
        </button>
        <button type="button" aria-label="分页预览"><Ico><path d="M0 5.500h16M0 10.500h6V15M10 15v-4.500h6M6.500 2v4M10.500 2v4" /></Ico></button>
        <button type="button" aria-label="页面布局" className="flex items-center gap-1">
          <Ico><path d="M4.500.5h7v4h-7zM.5 4.500h15v6H.5zM4.500 10.500h7v4h-7z" /></Ico>
          <Caret />
        </button>
      </div>
      <button type="button" aria-label="护眼模式"><Ico w={18}><path d="M1 9c4-6 12-6 16 0-4 6-12 6-16 0z" /><circle cx="9" cy="9" r="3" /></Ico></button>
      <span className="h-6 w-px bg-[#cecece]" />
      <button type="button" className="flex items-center gap-1.5">100%<Caret /></button>
      <span className="h-px w-2.5 bg-[#555]" />
      <input
        type="range"
        aria-label="显示比例"
        defaultValue="50"
        className="h-px w-36 appearance-none bg-[#6a6a6a] [&::-webkit-slider-thumb]:size-3 [&::-webkit-slider-thumb]:appearance-none [&::-webkit-slider-thumb]:rounded-full [&::-webkit-slider-thumb]:border [&::-webkit-slider-thumb]:border-[#555] [&::-webkit-slider-thumb]:bg-[#e7e7e7]"
      />
      <Ico w={12}><path d="M6 0v12M0 6h12" strokeWidth="1.500" /></Ico>
    </div>
  </footer>
);

/* ---------- Site stamp in the lower right corner ---------- */

const SiteStamp = () => (
  <div className="pointer-events-none absolute right-[3px] bottom-[3px] z-20 flex h-[95px] w-[390px] items-stretch justify-between bg-white/60 pr-1.5 pl-2.5">
    <div className="flex flex-col pt-1 whitespace-nowrap">
      <span className="text-[41px] leading-[46px] font-bold text-[#fb2a2a]">电脑技术网</span>
      <span className='font-["Liberation_Serif",serif] text-[30px] leading-[48px] font-bold text-[#2d7bf7]'>www.tagxp.com</span>
    </div>
    <div className='relative flex w-[156px] items-center justify-center rounded-3xl bg-[#2a7efb] pb-2 font-["Open_Sans",sans-serif] text-[74px] leading-none font-semibold text-white'>
      TAG
      <svg width="50" height="40" viewBox="0 0 50 40" className="absolute bottom-2 left-2 opacity-40" aria-hidden="true">
        <path d="M2 30C-1 20 14 8 38 4 22 10 12 20 18 26c8 4 16-4 18-12 4 14-10 26-22 22-6-1-10-3-12-6z" fill="#1566c8" />
      </svg>
      <svg width="26" height="28" viewBox="0 0 26 28" className="absolute -right-1 bottom-4 opacity-40" aria-hidden="true">
        <rect x="2" y="3" width="21" height="21" rx="4" fill="#e8663c" transform="rotate(-8 13 14)" />
        <path d="M8 9h9v4H8v5h9" fill="none" stroke="#fff" strokeWidth="2" />
      </svg>
      <span className="absolute right-5 bottom-6 font-['Noto_Sans_CJK_SC',sans-serif] text-lg leading-5 font-bold whitespace-nowrap text-[#1566c8]/40">极光下载站</span>
      <span className="absolute right-1.5 bottom-1 text-[15px] leading-4 font-bold whitespace-nowrap text-[#1566c8]/40">www.xz7.com</span>
    </div>
  </div>
);

const App: React.FC = () => (
  <div className='relative flex h-screen flex-col overflow-hidden bg-[#d8d8d8] font-["Noto_Sans","Noto_Sans_CJK_SC",sans-serif]'>
    <TitleBar />
    <MenuRow />
    <Ribbon />
    <main className="flex min-h-0 flex-1">
      <section className="flex min-w-0 flex-1 flex-col">
        <FormulaBar />
        <div className="flex min-h-0 flex-1">
          <Grid />
          <VScroll />
        </div>
        <SheetTabs />
      </section>
      <SelectionPane />
      <SideRail />
    </main>
    <StatusBar />
    <SiteStamp />
  </div>
);

export default App;
